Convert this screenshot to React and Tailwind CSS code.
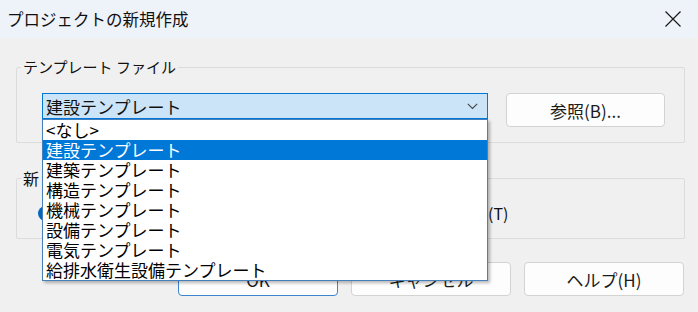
import React from 'react'

const templates = [
  '<なし>',
  '建設テンプレート',
  '建築テンプレート',
  '構造テンプレート',
  '機械テンプレート',
  '設備テンプレート',
  '電気テンプレート',
  '給排水衛生設備テンプレート',
]

const Button = ({ children, primary }) => (
  <button
    className={`w-[160px] h-[34px] rounded-[4px] bg-[#fdfdfd] text-[17px] leading-none text-[#1b1b1b] border ${
      primary ? 'border-[#3d84cf]' : 'border-[#d3d3d3]'
    }`}
  >
    {children}
  </button>
)

const App = () => {
  const selected = 1

  return (
    <div className="w-[698px] h-[312px] overflow-hidden bg-[#f0f0f0] text-[#111] font-['Noto_Sans_CJK_JP',sans-serif]">
      {/* Title bar */}
      <div className="h-[38px] bg-[#eef2f9] flex items-center justify-between pl-[7px] pr-[13px]">
        <span className="text-[16.5px] leading-none">プロジェクトの新規作成</span>
        <svg width="18" height="18" viewBox="0 0 18 18" className="mr-[3px]">
          <path d="M1.5 1.5 L16.5 16.5 M16.5 1.5 L1.5 16.5" stroke="#1a1a1a" strokeWidth="1.2" fill="none" />
        </svg>
      </div>

      <div className="pl-[16px] pr-[13px] pt-[18px]">
        {/* Template file group */}
        <fieldset className="border border-[#dcdcdc] rounded-[2px] pl-[4px] pr-[19px] pb-[15px]">
          <legend className="px-[2px] text-[15px] leading-[22px]">テンプレート ファイル</legend>
          <div className="flex items-start gap-[18px] mt-[15px] ml-[21px]">
            <div className="relative w-[446px] h-[26px]">
              <div className="h-full bg-[#cce4f7] border border-[#0078d7] flex items-center justify-between pl-[3px] pr-[9px]">
                <span className="text-[17px] leading-none">建設テンプレート</span>
                <svg width="11" height="7" viewBox="0 0 11 7">
                  <path d="M0.8 0.8 L5.5 5.5 L10.2 0.8" stroke="#444" strokeWidth="1.1" fill="none" />
                </svg>
              </div>
              {/* Open list */}
              <ul className="absolute left-0 top-[26px] w-[446px] z-10 bg-white border border-[#4580bd] shadow-[2px_2px_3px_rgba(0,0,0,0.28)]">
                {templates.map((t, i) => (
                  <li
                    key={t}
                    className={`h-[20px] pl-[3px] text-[17px] leading-[20px] whitespace-nowrap ${
                      i === selected ? 'bg-[#0078d7] text-white' : 'text-black'
                    }`}
                  >
                    {t}
                  </li>
                ))}
              </ul>
            </div>
            <button className="w-[159px] h-[34px] rounded-[4px] bg-[#fdfdfd] border border-[#d3d3d3] text-[17px] leading-none text-[#1b1b1b]">
              参照(B)...
            </button>
          </div>
        </fieldset>

        {/* Create new group */}
        <fieldset className="mt-[24px] border border-[#dcdcdc] rounded-[2px] pl-[4px] pb-[14px]">
          <legend className="px-[2px] text-[16px] leading-[22px] tracking-[3px]">新規作成</legend>
          <div className="mt-[13px] ml-[17px] h-[22px] flex items-center text-[16px]">
            <div className="w-[234px] flex items-center">
              <span className="w-[15px] h-[15px] rounded-full bg-[#0067c0] flex items-center justify-center">
                <span className="w-[6px] h-[6px] rounded-full bg-white" />
              </span>
              <span className="ml-[6px]">プロジェクト(P)</span>
            </div>
            <span className="w-[15px] h-[15px] rounded-full border border-[#555] bg-white" />
            <span className="ml-[6px]">プロジェクト テンプレート(T)</span>
          </div>
        </fieldset>

        {/* Footer buttons */}
        <div className="mt-[23px] flex justify-end gap-[13px] mr-[1px]">
          <Button primary>OK</Button>
          <Button>キャンセル</Button>
          <Button>ヘルプ(H)</Button>
        </div>
      </div>
    </div>
  )
}

export default App
